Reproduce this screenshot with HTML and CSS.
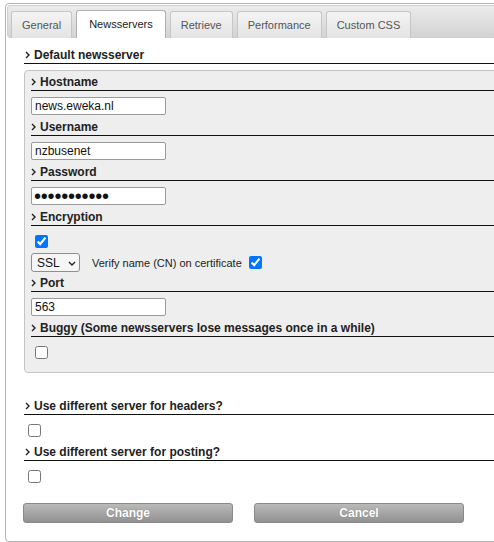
FILE: index.html
```html
<!DOCTYPE html>
<html lang="en">
	<head>
		<meta charset="utf-8">
		<title>Config - Newsservers</title>
		<link rel="stylesheet" href="styles.css">
	</head>
	<body>
	<div class="tabs">
		<ul class="tab-bar">
			<li class="tab">General</li>
			<li class="tab active">Newsservers</li>
			<li class="tab">Retrieve</li>
			<li class="tab">Performance</li>
			<li class="tab">Custom CSS</li>
		</ul>
		<div class="panel">
			<h3 class="heading"><svg class="chev" width="5" height="8" viewBox="0 0 5 8"><polyline points="1,1 4,4 1,7" /></svg>Default newsserver</h3>

			<!-- default server settings -->
			<div class="group">
				<h4 class="heading"><svg class="chev" width="5" height="8" viewBox="0 0 5 8"><polyline points="1,1 4,4 1,7" /></svg>Hostname</h4>
				<div class="control"><input class="text" type="text" value="news.eweka.nl"></div>

				<h4 class="heading"><svg class="chev" width="5" height="8" viewBox="0 0 5 8"><polyline points="1,1 4,4 1,7" /></svg>Username</h4>
				<div class="control"><input class="text" type="text" value="nzbusenet"></div>

				<h4 class="heading"><svg class="chev" width="5" height="8" viewBox="0 0 5 8"><polyline points="1,1 4,4 1,7" /></svg>Password</h4>
				<div class="control"><input class="text password" type="password" value="nzbusenet12"></div>

				<h4 class="heading"><svg class="chev" width="5" height="8" viewBox="0 0 5 8"><polyline points="1,1 4,4 1,7" /></svg>Encryption</h4>
				<div class="control stack">
					<input class="check-top" type="checkbox" checked>
					<div class="row">
						<span class="select-wrap">
							<select class="select"><option>SSL</option><option>TLS</option></select>
							<svg class="select-arrow" width="8" height="5" viewBox="0 0 8 5"><polyline points="1,1 4,4 7,1" /></svg>
						</span>
						<span class="label">Verify name (CN) on certificate</span>
						<input class="check-side" type="checkbox" checked>
					</div>
				</div>

				<h4 class="heading"><svg class="chev" width="5" height="8" viewBox="0 0 5 8"><polyline points="1,1 4,4 1,7" /></svg>Port</h4>
				<div class="control"><input class="text" type="text" value="563"></div>

				<h4 class="heading"><svg class="chev" width="5" height="8" viewBox="0 0 5 8"><polyline points="1,1 4,4 1,7" /></svg>Buggy (Some newsservers lose messages once in a while)</h4>
				<div class="control"><input type="checkbox"></div>
			</div>

			<h3 class="heading extra"><svg class="chev" width="5" height="8" viewBox="0 0 5 8"><polyline points="1,1 4,4 1,7" /></svg>Use different server for headers?</h3>
			<div class="control"><input type="checkbox"></div>

			<h3 class="heading"><svg class="chev" width="5" height="8" viewBox="0 0 5 8"><polyline points="1,1 4,4 1,7" /></svg>Use different server for posting?</h3>
			<div class="control"><input type="checkbox"></div>

			<div class="buttons">
				<button class="btn" type="button">Change</button>
				<button class="btn" type="button">Cancel</button>
			</div>
		</div>
	</div>
	</body>
</html>
```

FILE: styles.css
```css
		html, body{
			margin: 0;
			overflow: hidden;
		}
		body{
			font-family: "Liberation Sans", Arial, sans-serif;
			font-size: 12px;
			color: #222;
			background: #fff;
		}
		.tabs{
			width: 560px;
			margin: 3px 0 0 5px;
			border: 1px solid #b4b4b4;
			border-radius: 4px;
			padding: 1px;
		}
		.tab-bar{
			display: flex;
			align-items: flex-end;
			gap: 4px;
			margin: 0;
			padding: 4px 3px 0 3px;
			list-style: none;
			border: 1px solid #cfcfcf;
			border-radius: 3px;
			background: linear-gradient(#ebebeb, #d3d3d3);
		}
		.tab{
			height: 26px;
			line-height: 26px;
			padding: 0 10px;
			margin-bottom: -1px;
			border: 1px solid #c6c6c6;
			border-bottom: none;
			border-radius: 3px 3px 0 0;
			background: linear-gradient(#f4f4f4, #e3e3e3);
			color: #555;
			font-size: 11px;
		}
		.tab.active{
			height: 27px;
			padding: 0 12px;
			background: #fff;
			border-color: #b0b0b0;
			color: #222;
		}
		.panel{
			padding: 9px 0 17px 17px;
		}
		.heading{
			display: flex;
			align-items: center;
			gap: 4px;
			margin: 0;
			height: 16px;
			line-height: 16px;
			font-size: 12px;
			font-weight: bold;
			color: #222;
			border-bottom: 1px solid #111;
		}
		.chev{
			flex: none;
			margin-left: 1px;
		}
		.chev polyline, .select-arrow polyline{
			fill: none;
			stroke: #222;
			stroke-width: 1.4;
		}
		.group{
			margin-top: 6px;
			padding: 3px 0 6px 6px;
			border: 1px solid #c4c4c4;
			border-radius: 4px;
			background: #eeeeee;
		}
		.group .chev{
			margin-left: 0;
		}
		.extra{
			margin-top: 25px;
		}
		.control{
			display: flex;
			align-items: center;
			margin: 6px 0 4px;
		}
		.control.stack{
			flex-direction: column;
			align-items: flex-start;
			margin-bottom: 3px;
		}
		.check-top{
			margin-bottom: 5px;
		}
		.text{
			box-sizing: border-box;
			width: 135px;
			height: 18px;
			margin: 0;
			padding: 0 3px;
			border: 1px solid #9a9a9a;
			border-radius: 2px;
			background: #fff;
			font-family: "Liberation Sans", Arial, sans-serif;
			font-size: 12px;
			color: #111;
		}
		.password{
			font-size: 20px;
			line-height: 16px;
			letter-spacing: -0.2px;
			padding: 0 2px;
		}
		.row{
			display: flex;
			align-items: center;
		}
		.select-wrap{
			position: relative;
			display: inline-block;
		}
		.select{
			box-sizing: border-box;
			width: 49px;
			height: 19px;
			margin: 0;
			padding: 0 0 0 5px;
			-webkit-appearance: none;
			appearance: none;
			border: 1px solid #8f8f8f;
			border-radius: 3px;
			background: #f6f6f6;
			font-family: "Liberation Sans", Arial, sans-serif;
			font-size: 12px;
			color: #111;
		}
		.select-arrow{
			position: absolute;
			left: 37px;
			top: 8px;
			pointer-events: none;
		}
		.label{
			margin-left: 12px;
			font-size: 11px;
			color: #222;
		}
		.check-side{
			margin-left: 7px;
		}
		.buttons{
			display: flex;
			gap: 21px;
			margin: 17px 0 0 -1px;
		}
		.btn{
			box-sizing: border-box;
			width: 210px;
			height: 20px;
			padding: 0;
			border: 1px solid #8a8a8a;
			border-radius: 3px;
			background: linear-gradient(#bababa, #919191);
			color: #fff;
			font-family: "Liberation Sans", Arial, sans-serif;
			font-size: 12px;
			font-weight: bold;
			text-shadow: 0 0 1px rgba(0,0,0,0.3);
		}
```
